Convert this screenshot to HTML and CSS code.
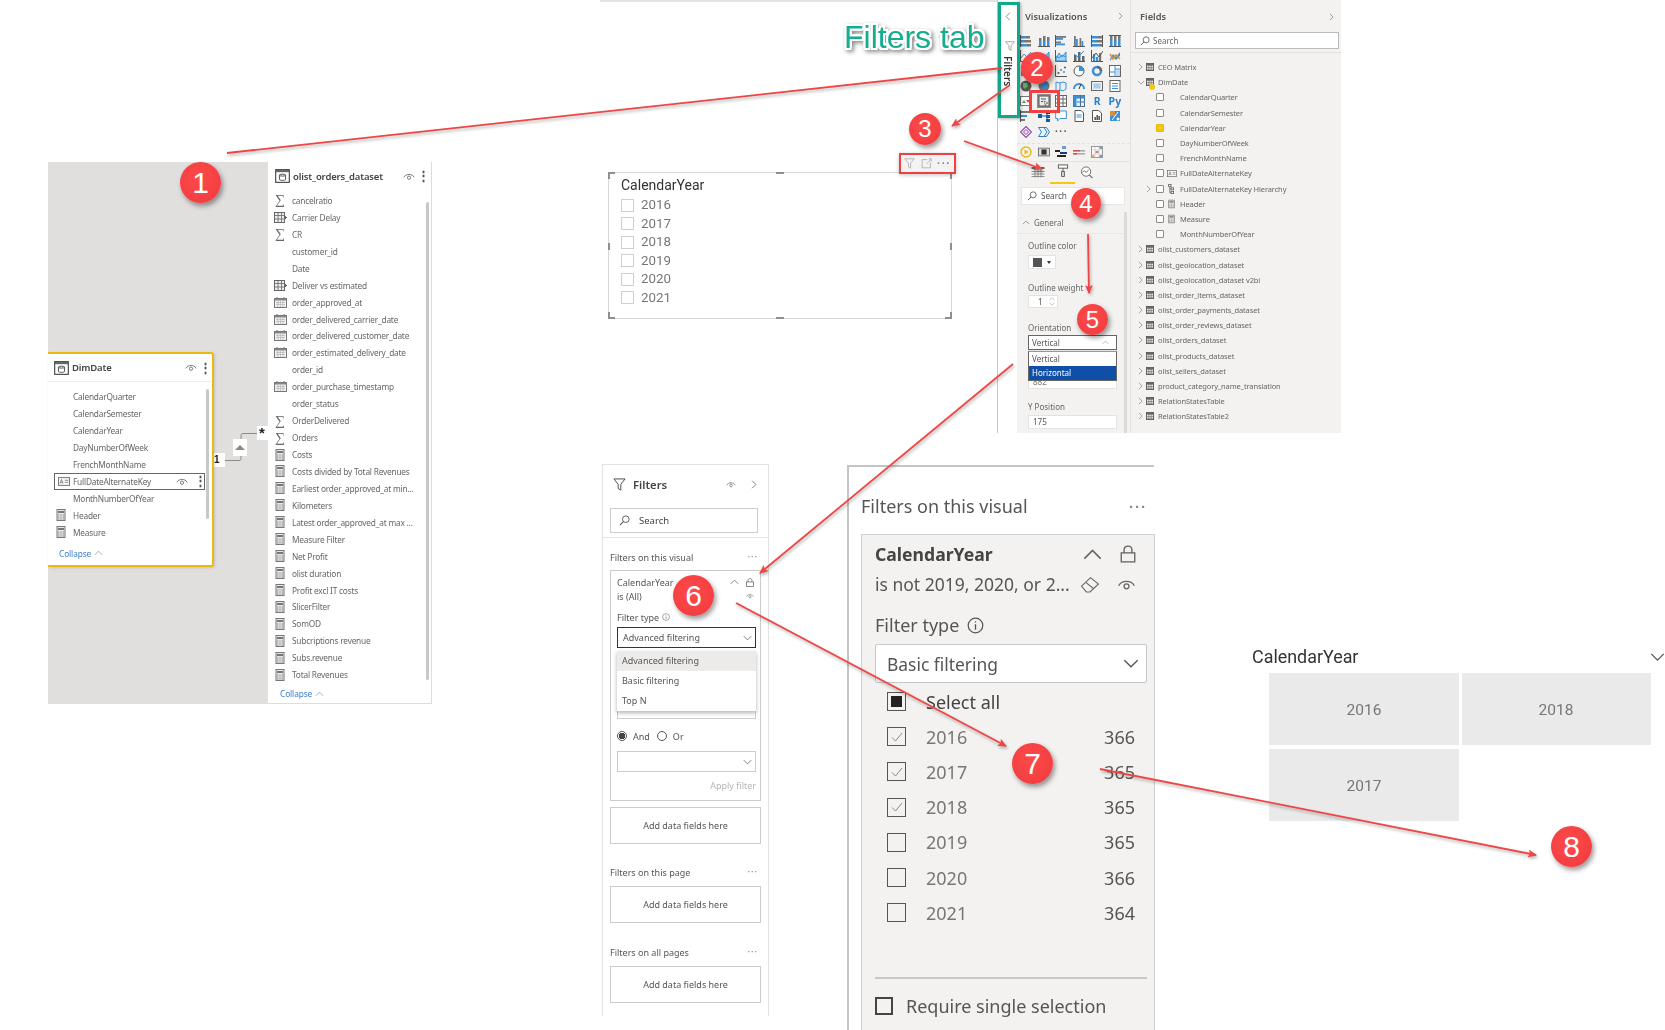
FILE: index.html
```html
<!DOCTYPE html>
<html lang="en">
<head>
<meta charset="utf-8">
<title>Power BI slicer walkthrough</title>
<link rel="stylesheet" href="styles.css">
</head>
<body>
<svg class="defs" width="0" height="0" aria-hidden="true">
  <symbol id="calc" viewBox="0 0 10 12"><rect x="1" y=".5" width="8" height="11" fill="#e8e8e8" stroke="#777"/><rect x="2" y="2" width="6" height="2" fill="#777"/><path d="M2 6h1.400M4.300 6h1.400M6.600 6H8M2 8h1.400M4.300 8h1.400M6.600 8H8M2 10h1.400M4.300 10h1.400M6.600 10H8" stroke="#888"/></symbol>
  <symbol id="cal" viewBox="0 0 13 11"><rect x=".5" y="1.500" width="12" height="9" fill="#f1f1f1" stroke="#777"/><rect x="1" y="2" width="11" height="1.500" fill="#888"/><path d="M2 5.500h9M2 7.500h9M4 4v6M6.500 4v6M9 4v6" stroke="#bbb" stroke-width=".8"/><path d="M3 0v2M10 0v2" stroke="#777"/></symbol>
  <symbol id="gridm" viewBox="0 0 13 11"><rect x=".5" y=".5" width="10" height="10" fill="#eee" stroke="#666"/><path d="M.5 3.500h10M.5 7h10M4 .5v10M7.500 .5v10" stroke="#666" stroke-width=".8"/><path d="M10 5.500h3M11.500 4v3" stroke="#666"/></symbol>
  <symbol id="tbl" viewBox="0 0 9 9"><rect x=".5" y=".5" width="8" height="8" fill="#f2f2f2" stroke="#555"/><path d="M.5 2.800h8M.5 5h8M.5 7h8M3.200 .5v8M5.800 .5v8" stroke="#666" stroke-width=".7"/><rect x="1" y="1" width="7" height="1.400" fill="#666"/></symbol>
  <symbol id="head" viewBox="0 0 16 15"><rect x=".7" y=".7" width="14.600" height="13.600" fill="#fff" stroke="#444" stroke-width="1.200"/><rect x="1" y="1" width="14" height="2.400" fill="#666"/><ellipse cx="8" cy="6.600" rx="3.300" ry="1" fill="none" stroke="#444"/><path d="M4.700 6.600v4.600c0 .6 1.400 1 3.300 1s3.300-.4 3.300-1V6.600" fill="none" stroke="#444"/></symbol>
  <symbol id="eye" viewBox="0 0 14 10"><path d="M1 6c2-4.600 10-4.600 12 0" fill="none" stroke="#666" stroke-width="1"/><circle cx="7" cy="6.400" r="1.900" fill="none" stroke="#666"/></symbol>
  <symbol id="abc" viewBox="0 0 14 10"><rect x=".5" y=".5" width="13" height="9" fill="#f6f6f6" stroke="#666"/><path d="M2.400 7.400l1.700-4.800 1.700 4.800M3 6h2.200M8 3.600h4M8 6h4" fill="none" stroke="#666" stroke-width=".8"/></symbol>
  <symbol id="up" viewBox="0 0 12 8"><path d="M1 6.500l5-5 5 5" fill="none" stroke="currentColor" stroke-width="1"/></symbol>
  <symbol id="down" viewBox="0 0 12 8"><path d="M1 1.500l5 5 5-5" fill="none" stroke="currentColor" stroke-width="1"/></symbol>
  <symbol id="left" viewBox="0 0 8 12"><path d="M6.500 1l-5 5 5 5" fill="none" stroke="currentColor" stroke-width="1"/></symbol>
  <symbol id="right" viewBox="0 0 8 12"><path d="M1.500 1l5 5-5 5" fill="none" stroke="currentColor" stroke-width="1"/></symbol>
  <symbol id="search" viewBox="0 0 12 12"><circle cx="7.400" cy="4.600" r="3.600" fill="none" stroke="#555"/><path d="M4.800 7.200L1 11" stroke="#555" stroke-width="1.100"/></symbol>
  <symbol id="funnel" viewBox="0 0 14 14"><path d="M1 1h12L8.400 6.800V13L5.600 11.400V6.800z" fill="none" stroke="currentColor"/></symbol>
  <symbol id="lock" viewBox="0 0 14 16"><path d="M3.500 7V4.400C3.500 2.400 5 1 7 1s3.500 1.400 3.500 3.400V7" fill="none" stroke="currentColor" stroke-width="1.200"/><rect x="1" y="7" width="12" height="8" fill="none" stroke="currentColor" stroke-width="1.200"/></symbol>
  <symbol id="eraser" viewBox="0 0 18 16"><path d="M1 9.500L9.500 1.500 17 7.500 9 15H5.500z" fill="none" stroke="currentColor"/><path d="M5 6l7.500 6" stroke="currentColor"/></symbol>
  <symbol id="info" viewBox="0 0 14 14"><circle cx="7" cy="7" r="6" fill="none" stroke="currentColor"/><path d="M7 6v4.500M7 3.400v1.200" stroke="currentColor" stroke-width="1.100"/></symbol>
  <symbol id="expand" viewBox="0 0 14 14"><path d="M8 2H1.500v10.500H12V6" fill="none" stroke="currentColor"/><path d="M7 7.500l6-6M9.500 1H13v3.500" fill="none" stroke="currentColor"/></symbol>
</svg>

<main class="canvas">
  <div class="topline"></div>

  <!-- model view -->
  <section class="shot model">
    <svg class="connector" viewBox="0 0 220 542" aria-hidden="true">
      <path d="M170 298.500h21q2 0 2-2v-23q0-2 2-2h19" fill="none" stroke="#8a8a8a" stroke-width="1"/>
      <rect x="164" y="291" width="13" height="14" fill="#fff"/>
      <rect x="185" y="277" width="14" height="17" fill="#fff"/>
      <path d="M187 288l5-5 5 5z" fill="#888"/>
      <rect x="209" y="264" width="12" height="14" fill="#fff"/>
    </svg>
    <span class="one">1</span><span class="many">*</span>

    <article class="dim-card">
      <header class="card-head">
        <svg class="head-ic"><use href="#head"/></svg>
        <strong class="card-name">DimDate</strong>
        <svg class="eye"><use href="#eye"/></svg>
        <span class="vdots">⋮</span>
      </header>
      <div class="m-list">
        <div class="m-row"><span class="m-ic"></span>CalendarQuarter</div>
        <div class="m-row"><span class="m-ic"></span>CalendarSemester</div>
        <div class="m-row"><span class="m-ic"></span>CalendarYear</div>
        <div class="m-row"><span class="m-ic"></span>DayNumberOfWeek</div>
        <div class="m-row"><span class="m-ic"></span>FrenchMonthName</div>
        <div class="m-row m-sel"><span class="m-ic"><svg class="i14"><use href="#abc"/></svg></span>FullDateAlternateKey<svg class="eye sel-eye"><use href="#eye"/></svg><span class="vdots sel-dots">⋮</span></div>
        <div class="m-row"><span class="m-ic"></span>MonthNumberOfYear</div>
        <div class="m-row"><span class="m-ic"><svg class="i10"><use href="#calc"/></svg></span>Header</div>
        <div class="m-row"><span class="m-ic"><svg class="i10"><use href="#calc"/></svg></span>Measure</div>
      </div>
      <div class="collapse">Collapse <svg class="col-up"><use href="#up"/></svg></div>
      <div class="scroll dim-scroll"></div>
    </article>
  </section>

  <article class="shot orders">
    <header class="card-head orders-head">
      <svg class="head-ic"><use href="#head"/></svg>
      <strong class="card-name">olist_orders_dataset</strong>
      <svg class="eye"><use href="#eye"/></svg>
      <span class="vdots">⋮</span>
    </header>
    <div class="m-list">
      <div class="m-row"><span class="m-ic sig">∑</span>cancelratio</div>
      <div class="m-row"><span class="m-ic"><svg class="i13"><use href="#gridm"/></svg></span>Carrier Delay</div>
      <div class="m-row"><span class="m-ic sig">∑</span>CR</div>
      <div class="m-row"><span class="m-ic"></span>customer_id</div>
      <div class="m-row"><span class="m-ic"></span>Date</div>
      <div class="m-row"><span class="m-ic"><svg class="i13"><use href="#gridm"/></svg></span>Deliver vs estimated</div>
      <div class="m-row"><span class="m-ic"><svg class="i13"><use href="#cal"/></svg></span>order_approved_at</div>
      <div class="m-row"><span class="m-ic"><svg class="i13"><use href="#cal"/></svg></span>order_delivered_carrier_date</div>
      <div class="m-row"><span class="m-ic"><svg class="i13"><use href="#cal"/></svg></span>order_delivered_customer_date</div>
      <div class="m-row"><span class="m-ic"><svg class="i13"><use href="#cal"/></svg></span>order_estimated_delivery_date</div>
      <div class="m-row"><span class="m-ic"></span>order_id</div>
      <div class="m-row"><span class="m-ic"><svg class="i13"><use href="#cal"/></svg></span>order_purchase_timestamp</div>
      <div class="m-row"><span class="m-ic"></span>order_status</div>
      <div class="m-row"><span class="m-ic sig">∑</span>OrderDelivered</div>
      <div class="m-row"><span class="m-ic sig">∑</span>Orders</div>
      <div class="m-row"><span class="m-ic"><svg class="i10"><use href="#calc"/></svg></span>Costs</div>
      <div class="m-row"><span class="m-ic"><svg class="i10"><use href="#calc"/></svg></span>Costs divided by Total Revenues</div>
      <div class="m-row"><span class="m-ic"><svg class="i10"><use href="#calc"/></svg></span>Earliest order_approved_at min...</div>
      <div class="m-row"><span class="m-ic"><svg class="i10"><use href="#calc"/></svg></span>Kilometers</div>
      <div class="m-row"><span class="m-ic"><svg class="i10"><use href="#calc"/></svg></span>Latest order_approved_at max ...</div>
      <div class="m-row"><span class="m-ic"><svg class="i10"><use href="#calc"/></svg></span>Measure Filter</div>
      <div class="m-row"><span class="m-ic"><svg class="i10"><use href="#calc"/></svg></span>Net Profit</div>
      <div class="m-row"><span class="m-ic"><svg class="i10"><use href="#calc"/></svg></span>olist duration</div>
      <div class="m-row"><span class="m-ic"><svg class="i10"><use href="#calc"/></svg></span>Profit excl IT costs</div>
      <div class="m-row"><span class="m-ic"><svg class="i10"><use href="#calc"/></svg></span>SlicerFilter</div>
      <div class="m-row"><span class="m-ic"><svg class="i10"><use href="#calc"/></svg></span>SomOD</div>
      <div class="m-row"><span class="m-ic"><svg class="i10"><use href="#calc"/></svg></span>Subcriptions revenue</div>
      <div class="m-row"><span class="m-ic"><svg class="i10"><use href="#calc"/></svg></span>Subs.revenue</div>
      <div class="m-row"><span class="m-ic"><svg class="i10"><use href="#calc"/></svg></span>Total Revenues</div>
    </div>
    <div class="collapse orders-collapse">Collapse <svg class="col-up"><use href="#up"/></svg></div>
    <div class="scroll orders-scroll"></div>
  </article>

  <!-- slicer -->
  <section class="shot slicer">
    <div class="slicer-title">CalendarYear</div>
    <div class="s-row"><span class="s-box"></span>2016</div>
    <div class="s-row"><span class="s-box"></span>2017</div>
    <div class="s-row"><span class="s-box"></span>2018</div>
    <div class="s-row"><span class="s-box"></span>2019</div>
    <div class="s-row"><span class="s-box"></span>2020</div>
    <div class="s-row"><span class="s-box"></span>2021</div>
    <i class="corner c-tl"></i><i class="corner c-tr"></i><i class="corner c-bl"></i><i class="corner c-br"></i>
    <i class="hd e-t"></i><i class="hd e-b"></i><i class="hd e-l"></i><i class="hd e-r"></i>
  </section>
  <div class="shot visual-bar">
    <svg class="vb-ic"><use href="#funnel"/></svg>
    <svg class="vb-ic"><use href="#expand"/></svg>
    <span class="vb-more">···</span>
  </div>

  <!-- Power BI side panes -->
  <section class="shot pbi">
    <aside class="strip">
      <svg class="strip-chev"><use href="#left"/></svg>
      <svg class="strip-funnel"><use href="#funnel"/></svg>
      <span class="strip-text">Filters</span>
    </aside>

    <div class="viz">
      <header class="pane-head">Visualizations<svg class="pane-chev"><use href="#right"/></svg></header>
      <div class="viz-grid">
        <svg class="vi" viewBox="0 0 12 12"><path d="M.5 0v12" stroke="#555"/><rect x="1" y="1" width="5" height="2.500" fill="#3a8fd6"/><rect x="6" y="1" width="4" height="2.500" fill="#777"/><rect x="1" y="5" width="3" height="2.500" fill="#3a8fd6"/><rect x="4" y="5" width="7" height="2.500" fill="#777"/><rect x="1" y="9" width="6" height="2.500" fill="#3a8fd6"/><rect x="7" y="9" width="4" height="2.500" fill="#777"/></svg>
        <svg class="vi" viewBox="0 0 12 12"><path d="M0 11.500h12" stroke="#555"/><rect x="1" y="6" width="2.500" height="5" fill="#3a8fd6"/><rect x="1" y="3" width="2.500" height="3" fill="#777"/><rect x="5" y="7" width="2.500" height="4" fill="#3a8fd6"/><rect x="5" y="1" width="2.500" height="6" fill="#777"/><rect x="9" y="5" width="2.500" height="6" fill="#3a8fd6"/><rect x="9" y="2" width="2.500" height="3" fill="#777"/></svg>
        <svg class="vi" viewBox="0 0 12 12"><path d="M.5 0v12" stroke="#555"/><rect x="1" y="1" width="10" height="1.800" fill="#777"/><rect x="1" y="3" width="7" height="1.800" fill="#3a8fd6"/><rect x="1" y="6.500" width="5" height="1.800" fill="#777"/><rect x="1" y="8.500" width="9" height="1.800" fill="#3a8fd6"/></svg>
        <svg class="vi" viewBox="0 0 12 12"><path d="M0 11.500h12" stroke="#555"/><rect x="1" y="1" width="1.800" height="10" fill="#777"/><rect x="3" y="4" width="1.800" height="7" fill="#3a8fd6"/><rect x="6.500" y="3" width="1.800" height="8" fill="#777"/><rect x="8.500" y="6" width="1.800" height="5" fill="#3a8fd6"/></svg>
        <svg class="vi" viewBox="0 0 12 12"><path d="M.5 0v12M11.500 0v12" stroke="#555"/><rect x="1" y="1" width="6" height="2.500" fill="#3a8fd6"/><rect x="7" y="1" width="4" height="2.500" fill="#777"/><rect x="1" y="5" width="4" height="2.500" fill="#3a8fd6"/><rect x="5" y="5" width="6" height="2.500" fill="#777"/><rect x="1" y="9" width="7" height="2.500" fill="#3a8fd6"/><rect x="8" y="9" width="3" height="2.500" fill="#777"/></svg>
        <svg class="vi" viewBox="0 0 12 12"><path d="M0 .5h12M0 11.500h12" stroke="#555"/><rect x="1" y="5" width="2.500" height="6" fill="#3a8fd6"/><rect x="1" y="1" width="2.500" height="4" fill="#777"/><rect x="5" y="7" width="2.500" height="4" fill="#3a8fd6"/><rect x="5" y="1" width="2.500" height="6" fill="#777"/><rect x="9" y="4" width="2.500" height="7" fill="#3a8fd6"/><rect x="9" y="1" width="2.500" height="3" fill="#777"/></svg>

        <svg class="vi" viewBox="0 0 12 12"><path d="M.5 0v11.500H12" fill="none" stroke="#555"/><path d="M1 8l3-4 3 3 4-5" fill="none" stroke="#3a8fd6"/></svg>
        <svg class="vi" viewBox="0 0 12 12"><path d="M1 11V8l3-4 3 3 4-5v9z" fill="#9cc7ea" stroke="#3a8fd6"/></svg>
        <svg class="vi" viewBox="0 0 12 12"><path d="M.5 0v11.500H12" fill="none" stroke="#555"/><path d="M1 9l3-6 3 4 4-5v9H1z" fill="#a8d0ef" stroke="#3a8fd6"/><path d="M1 6l3 2 3-3 4 2" fill="none" stroke="#3a8fd6"/></svg>
        <svg class="vi" viewBox="0 0 12 12"><path d="M0 11.500h12" stroke="#555"/><rect x="1" y="5" width="2.500" height="6" fill="#666"/><rect x="5" y="2" width="2.500" height="9" fill="#666"/><rect x="9" y="6" width="2.500" height="5" fill="#666"/><path d="M1 4l4 3 6-6" fill="none" stroke="#3a8fd6"/></svg>
        <svg class="vi" viewBox="0 0 12 12"><path d="M.5 0v11.500H12" fill="none" stroke="#555"/><rect x="2" y="4" width="2.200" height="7" fill="#3a8fd6"/><rect x="5" y="7" width="2.200" height="4" fill="#3a8fd6"/><rect x="8" y="3" width="2.200" height="8" fill="#777"/><path d="M1 8l4-5 3 4 4-6" fill="none" stroke="#555"/></svg>
        <svg class="vi" viewBox="0 0 12 12"><path d="M1 9l3-5 3 3 4-5v4l-4 4-3-3-3 4z" fill="#3a8fd6"/><path d="M1 4l3 5 3-4 4 4" fill="none" stroke="#e0902e" stroke-width="1.600"/></svg>

        <svg class="vi" viewBox="0 0 12 12"><rect x="1" y="6" width="3" height="5" fill="#3a8fd6"/><rect x="8" y="2" width="3" height="4" fill="#777"/></svg>
        <svg class="vi" viewBox="0 0 12 12"><rect x="1" y="1" width="10" height="2" fill="#777"/><rect x="3" y="5" width="6" height="2" fill="#777"/><rect x="4.500" y="9" width="3" height="2" fill="#777"/></svg>
        <svg class="vi" viewBox="0 0 12 12"><path d="M.5 0v11.500H12" fill="none" stroke="#555"/><circle cx="3.500" cy="8" r="1" fill="#555"/><circle cx="6" cy="5" r="1" fill="#3a8fd6"/><circle cx="9" cy="7" r="1" fill="#3a8fd6"/><circle cx="10" cy="2.500" r="1" fill="#555"/></svg>
        <svg class="vi" viewBox="0 0 12 12"><circle cx="6" cy="6" r="5" fill="#fff" stroke="#555"/><path d="M6 6V1a5 5 0 0 1 5 5z" fill="#3a8fd6"/></svg>
        <svg class="vi" viewBox="0 0 12 12"><circle cx="6" cy="6" r="4" fill="none" stroke="#3a8fd6" stroke-width="2.500"/><path d="M6 2a4 4 0 0 1 4 4" fill="none" stroke="#666" stroke-width="2.500"/></svg>
        <svg class="vi" viewBox="0 0 12 12"><rect x=".5" y=".5" width="11" height="11" fill="#fff" stroke="#666"/><path d="M6 .5v11M.5 7h5.500M6 4h5.500" stroke="#3a8fd6"/><rect x="7" y="5" width="4" height="6" fill="#bcd9f0"/></svg>

        <svg class="vi" viewBox="0 0 12 12"><circle cx="6" cy="6" r="5.500" fill="#555"/><path d="M3 3h4l1 3-3 3-2-2z" fill="#5fae5f"/></svg>
        <svg class="vi" viewBox="0 0 12 12"><circle cx="6" cy="6" r="5.500" fill="#777"/><path d="M3 2h5l2 4-4 4-3-3z" fill="#3a8fd6"/></svg>
        <svg class="vi" viewBox="0 0 12 12"><path d="M1 2l3 1 4-1 3 1v6l-3 2-3-1-4 1z" fill="#e9f2fb" stroke="#3a8fd6"/><path d="M5 3v7" stroke="#3a8fd6"/></svg>
        <svg class="vi" viewBox="0 0 12 12"><path d="M1 9a5 5 0 0 1 10 0" fill="none" stroke="#3a8fd6" stroke-width="2"/><path d="M6 9l2-5" stroke="#333"/></svg>
        <svg class="vi" viewBox="0 0 12 12"><rect x=".5" y="1.500" width="11" height="9" fill="#eee" stroke="#666"/><rect x="2.500" y="3.500" width="7" height="5" fill="#a9cdee"/></svg>
        <svg class="vi" viewBox="0 0 12 12"><rect x="1" y=".5" width="10" height="11" fill="#fff" stroke="#666"/><path d="M3 3.500h6M3 6h6M3 8.500h6" stroke="#3a8fd6"/></svg>

        <svg class="vi" viewBox="0 0 12 12"><rect x=".5" y="1.500" width="11" height="9" fill="#fff" stroke="#777"/><path d="M2 8l2-3 2 3z" fill="#4aa564"/><path d="M6 5h4l-2 3z" fill="#c94f4f"/></svg>
        <svg class="vi slicer-ic" viewBox="0 0 14 14"><rect width="14" height="14" fill="#8f8f8f"/><rect x="2" y="2" width="10" height="10" fill="#ececec" stroke="#555"/><path d="M4 5h5M4 7.500h2" stroke="#555"/><path d="M7 7l4 2-2 .6-.6 2z" fill="#fff" stroke="#333" stroke-width=".5"/></svg>
        <svg class="vi" viewBox="0 0 12 12"><rect x=".5" y=".5" width="11" height="11" fill="#fff" stroke="#666"/><path d="M.5 4h11M.5 8h11M4 .5v11M8 .5v11" stroke="#666"/></svg>
        <svg class="vi" viewBox="0 0 12 12"><rect x=".5" y=".5" width="11" height="11" fill="#e3eefb" stroke="#4a6f96"/><rect x=".5" y=".5" width="11" height="3" fill="#3a8fd6"/><rect x=".5" y=".5" width="3" height="11" fill="#3a8fd6"/><path d="M4 7h7.500M7.500 .5v11" stroke="#4a6f96"/></svg>
        <span class="vi-txt">R</span>
        <span class="vi-txt">Py</span>

        <svg class="vi" viewBox="0 0 12 12"><path d="M.5 0v12" stroke="#555"/><rect x="1" y="1" width="9" height="2" fill="#777"/><rect x="1" y="5" width="6" height="2" fill="#3a8fd6"/><rect x="1" y="9" width="4" height="2" fill="#777"/></svg>
        <svg class="vi" viewBox="0 0 12 12"><path d="M3 6h6M9 2v8" stroke="#0f5ea8"/><rect x="0" y="4" width="4" height="4" fill="#0f5ea8"/><rect x="8" y="0" width="4" height="4" fill="#333"/><rect x="8" y="5" width="4" height="3" fill="#0f5ea8"/><rect x="8" y="9" width="4" height="3" fill="#0f5ea8"/></svg>
        <svg class="vi" viewBox="0 0 12 12"><path d="M.7 1h10.600v7.500H5L2.500 11V8.500H.7z" fill="#fff" stroke="#3a8fd6"/></svg>
        <svg class="vi" viewBox="0 0 12 12"><path d="M2 .5h6l2.500 2.500v8.500H2z" fill="#fff" stroke="#555"/><path d="M3.500 5h5M3.500 7h5" stroke="#3a8fd6"/></svg>
        <svg class="vi" viewBox="0 0 12 12"><path d="M1.500 .5h6L10.500 3v8.500h-9z" fill="#fff" stroke="#555"/><rect x="3.500" y="7" width="1.300" height="3" fill="#333"/><rect x="5.500" y="5" width="1.300" height="5" fill="#333"/><rect x="7.500" y="6" width="1.300" height="4" fill="#333"/></svg>
        <svg class="vi" viewBox="0 0 12 12"><rect x="1" y="1" width="10" height="10" fill="#3a8fd6"/><rect x="1" y="1" width="5" height="5" fill="#e08a2e"/><path d="M3 10l3-4 3-4" stroke="#fff"/><circle cx="9" cy="9" r="1.500" fill="#fff"/></svg>

        <svg class="vi" viewBox="0 0 12 12"><path d="M6 .5L11.500 6 6 11.500.5 6z" fill="#f1e8f5" stroke="#8a4fa8" stroke-width="1.100"/><path d="M6 3.500L8.500 6 6 8.500 3.500 6z" fill="none" stroke="#8a4fa8"/></svg>
        <svg class="vi" viewBox="0 0 12 12"><path d="M.5 1.500h5.500l3 4.500-3 4.500H.5l3-4.500zM6 1.500h2.500l3 4.500-3 4.500H6" fill="#eaf3fb" stroke="#2f80c8"/></svg>
        <span class="vi-more">···</span>
      </div>

      <div class="viz-row">
        <svg class="vi" viewBox="0 0 12 12"><circle cx="6" cy="6" r="5" fill="none" stroke="#e8b90e" stroke-width="1.400"/><path d="M4.500 3.500l4 2.500-4 2.500z" fill="#e8b90e"/></svg>
        <svg class="vi" viewBox="0 0 14 12"><rect x=".5" y="1.500" width="13" height="9" fill="#ddd" stroke="#666"/><rect x="4" y="3" width="6" height="6" fill="#333"/></svg>
        <svg class="vi" viewBox="0 0 12 12"><rect x="7" width="4" height="3" fill="#6c9ec8"/><rect x="0" y="4" width="5" height="2" fill="#222"/><rect x="5" y="6" width="7" height="2" fill="#15406e"/><rect x="2" y="9" width="9" height="2" fill="#222"/></svg>
        <svg class="vi" viewBox="0 0 12 12"><rect y="4" width="7" height="1.600" fill="#c94f4f"/><rect x="7" y="4" width="5" height="1.600" fill="#aaa"/><rect y="7" width="4" height="1.600" fill="#c94f4f"/><rect x="4" y="7" width="8" height="1.600" fill="#aaa"/></svg>
        <svg class="vi" viewBox="0 0 12 12"><rect x=".5" y=".5" width="11" height="11" fill="#fff" stroke="#999"/><path d="M.5 4h11M.5 8h11M4 .5v11M8 .5v11" stroke="#bbb" stroke-width=".6"/><rect x="4.500" y="5" width="3" height="2" fill="#e07a7a"/><rect x="8.500" y="1" width="2.500" height="2" fill="#56b0a0"/><rect x="1" y="9" width="2.500" height="2" fill="#e0b050"/><rect x="8.500" y="9" width="2.500" height="2" fill="#5a9bd6"/></svg>
      </div>

      <div class="viz-tabs">
        <svg class="tab-ic" viewBox="0 0 14 12"><rect x=".5" y=".5" width="13" height="2" fill="#666"/><path d="M.5 5h13M.5 7.500h13M.5 10h13M4 3v8M7 3v8M10 3v8" stroke="#777" stroke-width=".8"/></svg>
        <div class="tab-on"><svg class="tab-ic" viewBox="0 0 12 14"><rect x="1" y="1" width="10" height="3.500" fill="#fff" stroke="#555"/><path d="M6 4.500V8M4.500 8h3v5.500h-3z" fill="#ddd" stroke="#555"/></svg></div>
        <svg class="tab-ic" viewBox="0 0 14 14"><circle cx="6" cy="6" r="5" fill="#fff" stroke="#666"/><path d="M2 7l2-2 2 2 3-3" fill="none" stroke="#666"/><path d="M9.500 9.500L13 13" stroke="#666" stroke-width="1.200"/></svg>
      </div>

      <div class="fmt-search"><svg class="srch-ic"><use href="#search"/></svg>Search</div>

      <div class="fmt">
        <div class="fmt-main">
          <div class="fmt-general"><svg class="gen-up"><use href="#up"/></svg>General</div>
          <div class="fmt-body">
            <div class="f-label first">Outline color</div>
            <div class="swatch-btn"><span class="swatch"></span><span class="caret"></span></div>
            <div class="f-label w-gap">Outline weight</div>
            <div class="spin">1<span class="spin-btns"><svg class="spin-ic"><use href="#up"/></svg><svg class="spin-ic"><use href="#down"/></svg></span></div>
            <div class="f-label o-gap">Orientation</div>
            <div class="sel-wrap">
              <div class="sel-box">Vertical<svg class="sel-up"><use href="#up"/></svg></div>
              <div class="under-input">882</div>
              <div class="sel-menu">
                <div class="opt">Vertical</div>
                <div class="opt opt-on">Horizontal</div>
              </div>
            </div>
            <div class="f-label y-gap">Y Position</div>
            <div class="y-input">175</div>
          </div>
        </div>
        <div class="fmt-scroll"></div>
      </div>
    </div>

    <div class="fields">
      <header class="pane-head fields-head">Fields<svg class="pane-chev fields-chev"><use href="#right"/></svg></header>
      <div class="fields-search"><svg class="srch-ic"><use href="#search"/></svg>Search</div>
      <div class="f-rows">
        <div class="t-row"><svg class="exp"><use href="#right"/></svg><svg class="ti"><use href="#tbl"/></svg>CEO Matrix</div>
        <div class="t-row"><svg class="exp exp-d"><use href="#down"/></svg><span class="ti-wrap"><svg class="ti"><use href="#tbl"/></svg><i class="y-dot"></i></span>DimDate</div>
        <div class="c-row"><span class="exp-gap"></span><span class="cb"></span><span class="c-ic"></span>CalendarQuarter</div>
        <div class="c-row"><span class="exp-gap"></span><span class="cb"></span><span class="c-ic"></span>CalendarSemester</div>
        <div class="c-row"><span class="exp-gap"></span><span class="cb cb-on"></span><span class="c-ic"></span>CalendarYear</div>
        <div class="c-row"><span class="exp-gap"></span><span class="cb"></span><span class="c-ic"></span>DayNumberOfWeek</div>
        <div class="c-row"><span class="exp-gap"></span><span class="cb"></span><span class="c-ic"></span>FrenchMonthName</div>
        <div class="c-row"><span class="exp-gap"></span><span class="cb"></span><span class="c-ic"><svg class="i11"><use href="#abc"/></svg></span>FullDateAlternateKey</div>
        <div class="c-row"><span class="exp-gap"><svg class="exp"><use href="#right"/></svg></span><span class="cb"></span><span class="c-ic"><svg class="i8" viewBox="0 0 8 12"><rect x=".5" y=".5" width="3" height="2.500" fill="none" stroke="#666"/><rect x="3.500" y="4.500" width="3" height="2.500" fill="none" stroke="#666"/><rect x="3.500" y="9" width="3" height="2.500" fill="none" stroke="#666"/><path d="M2 3v7.500h1.500M2 5.700h1.500" fill="none" stroke="#666"/></svg></span>FullDateAlternateKey Hierarchy</div>
        <div class="c-row"><span class="exp-gap"></span><span class="cb"></span><span class="c-ic"><svg class="i8"><use href="#calc"/></svg></span>Header</div>
        <div class="c-row"><span class="exp-gap"></span><span class="cb"></span><span class="c-ic"><svg class="i8"><use href="#calc"/></svg></span>Measure</div>
        <div class="c-row"><span class="exp-gap"></span><span class="cb"></span><span class="c-ic"></span>MonthNumberOfYear</div>
        <div class="t-row"><svg class="exp"><use href="#right"/></svg><svg class="ti"><use href="#tbl"/></svg>olist_customers_dataset</div>
        <div class="t-row"><svg class="exp"><use href="#right"/></svg><svg class="ti"><use href="#tbl"/></svg>olist_geolocation_dataset</div>
        <div class="t-row"><svg class="exp"><use href="#right"/></svg><svg class="ti"><use href="#tbl"/></svg>olist_geolocation_dataset v2bi</div>
        <div class="t-row"><svg class="exp"><use href="#right"/></svg><svg class="ti"><use href="#tbl"/></svg>olist_order_items_dataset</div>
        <div class="t-row"><svg class="exp"><use href="#right"/></svg><svg class="ti"><use href="#tbl"/></svg>olist_order_payments_dataset</div>
        <div class="t-row"><svg class="exp"><use href="#right"/></svg><svg class="ti"><use href="#tbl"/></svg>olist_order_reviews_dataset</div>
        <div class="t-row"><svg class="exp"><use href="#right"/></svg><svg class="ti"><use href="#tbl"/></svg>olist_orders_dataset</div>
        <div class="t-row"><svg class="exp"><use href="#right"/></svg><svg class="ti"><use href="#tbl"/></svg>olist_products_dataset</div>
        <div class="t-row"><svg class="exp"><use href="#right"/></svg><svg class="ti"><use href="#tbl"/></svg>olist_sellers_dataset</div>
        <div class="t-row"><svg class="exp"><use href="#right"/></svg><svg class="ti"><use href="#tbl"/></svg>product_category_name_translation</div>
        <div class="t-row"><svg class="exp"><use href="#right"/></svg><svg class="ti"><use href="#tbl"/></svg>RelationStatesTable</div>
        <div class="t-row"><svg class="exp"><use href="#right"/></svg><svg class="ti"><use href="#tbl"/></svg>RelationStatesTable2</div>
      </div>
    </div>
  </section>

  <!-- small filter pane -->
  <section class="shot fpane">
    <header class="fp-head">
      <svg class="fp-funnel"><use href="#funnel"/></svg>
      <strong class="fp-title">Filters</strong>
      <svg class="fp-eye"><use href="#eye"/></svg>
      <svg class="fp-chev"><use href="#right"/></svg>
    </header>
    <div class="fp-search"><svg class="fp-sic"><use href="#search"/></svg>Search</div>
    <div class="fp-divider"></div>
    <div class="fp-sec fp-sec1"><span>Filters on this visual</span><span class="fp-dots">···</span></div>
    <div class="fp-card">
      <div class="fpc-top"><span>CalendarYear</span><span class="fpc-icons"><svg class="fpc-up"><use href="#up"/></svg><svg class="fpc-lock"><use href="#lock"/></svg></span></div>
      <div class="fpc-top fpc-second"><span>is (All)</span><svg class="fpc-eye"><use href="#eye"/></svg></div>
      <div class="fpc-type">Filter type <svg class="fpc-info"><use href="#info"/></svg></div>
      <div class="fpc-select">Advanced filtering<svg class="fpc-chev"><use href="#down"/></svg></div>
      <div class="fpc-menu-wrap">
        <div class="fpc-under"></div>
        <div class="fpc-menu">
          <div class="fpc-opt fpc-opt-on">Advanced filtering</div>
          <div class="fpc-opt">Basic filtering</div>
          <div class="fpc-opt">Top N</div>
        </div>
      </div>
      <div class="fpc-radio"><span class="radio radio-on"></span>And<span class="radio radio-or"></span>Or</div>
      <div class="fpc-select fpc-select2"><svg class="fpc-chev"><use href="#down"/></svg></div>
      <div class="fpc-apply">Apply filter</div>
    </div>
    <div class="fp-add fp-add1">Add data fields here</div>
    <div class="fp-sec fp-sec2"><span>Filters on this page</span><span class="fp-dots">···</span></div>
    <div class="fp-add">Add data fields here</div>
    <div class="fp-sec fp-sec3"><span>Filters on all pages</span><span class="fp-dots">···</span></div>
    <div class="fp-add">Add data fields here</div>
  </section>

  <!-- enlarged filter pane -->
  <section class="shot big">
    <div class="big-head"><span>Filters on this visual</span><span class="big-dots">···</span></div>
    <div class="big-card">
      <div class="bc-line"><strong class="bc-name">CalendarYear</strong><span class="bc-icons"><svg class="bc-up"><use href="#up"/></svg><svg class="bc-lock"><use href="#lock"/></svg></span></div>
      <div class="bc-line bc-status"><span>is not 2019, 2020, or 2...</span><span class="bc-icons"><svg class="bc-eraser"><use href="#eraser"/></svg><svg class="bc-eye"><use href="#eye"/></svg></span></div>
      <div class="bc-type">Filter type<svg class="bc-info"><use href="#info"/></svg></div>
      <div class="bc-select">Basic filtering<svg class="bc-chev"><use href="#down"/></svg></div>
      <div class="bc-list">
        <div class="bc-row bc-all"><span class="bc-box bc-mixed"></span><span>Select all</span></div>
        <div class="bc-row"><span class="bc-box bc-tick"><svg class="tick" viewBox="0 0 14 14"><path d="M2 7.500l3.500 3.500L12 3" fill="none" stroke="#8a8a8a" stroke-width="1"/></svg></span><span class="bc-year">2016</span><span class="bc-count">366</span></div>
        <div class="bc-row"><span class="bc-box bc-tick"><svg class="tick" viewBox="0 0 14 14"><path d="M2 7.500l3.500 3.500L12 3" fill="none" stroke="#8a8a8a" stroke-width="1"/></svg></span><span class="bc-year">2017</span><span class="bc-count">365</span></div>
        <div class="bc-row"><span class="bc-box bc-tick"><svg class="tick" viewBox="0 0 14 14"><path d="M2 7.500l3.500 3.500L12 3" fill="none" stroke="#8a8a8a" stroke-width="1"/></svg></span><span class="bc-year">2018</span><span class="bc-count">365</span></div>
        <div class="bc-row"><span class="bc-box"></span><span class="bc-year">2019</span><span class="bc-count">365</span></div>
        <div class="bc-row"><span class="bc-box"></span><span class="bc-year">2020</span><span class="bc-count">366</span></div>
        <div class="bc-row"><span class="bc-box"></span><span class="bc-year">2021</span><span class="bc-count">364</span></div>
      </div>
      <div class="bc-rule"></div>
      <div class="bc-require"><span class="bc-rbox"></span>Require single selection</div>
    </div>
  </section>

  <!-- horizontal slicer -->
  <section class="shot hslicer">
    <header class="hs-head"><span>CalendarYear</span><svg class="hs-chev"><use href="#down"/></svg></header>
    <div class="hs-grid">
      <div class="tile">2016</div>
      <div class="tile">2018</div>
      <div class="tile">2017</div>
    </div>
  </section>

  <!-- annotations -->
  <div class="tab-frame"></div>
  <div class="red-frame viz-frame"></div>
  <div class="red-frame bar-frame"></div>
  <div class="tab-label">Filters tab</div>

  <svg class="arrows" viewBox="0 0 1665 1030" aria-hidden="true">
    <defs>
      <marker id="head-mark" markerWidth="9" markerHeight="8" refX="8" refY="4" orient="auto" markerUnits="userSpaceOnUse"><path d="M0 0l9 4-9 4 2-4z" fill="#f04545"/></marker>
    </defs>
    <g class="arrow-lines">
      <path d="M227 153L1002 68"/>
      <path d="M1010 85L952 126" marker-end="url(#head-mark)"/>
      <path d="M964 141L1042 169" marker-end="url(#head-mark)"/>
      <path d="M1088 234L1089 293" marker-end="url(#head-mark)"/>
      <path d="M1013 364L760 573" marker-end="url(#head-mark)"/>
      <path d="M736 603L1006 746" marker-end="url(#head-mark)"/>
      <path d="M1100 769L1536 855" marker-end="url(#head-mark)"/>
    </g>
  </svg>

  <span class="badge b1">1</span>
  <span class="badge b2">2</span>
  <span class="badge b3">3</span>
  <span class="badge b4">4</span>
  <span class="badge b5">5</span>
  <span class="badge b6">6</span>
  <span class="badge b7">7</span>
  <span class="badge b8">8</span>
</main>
</body>
</html>
```

FILE: styles.css
```css
* { box-sizing: border-box; }
html, body { margin: 0; padding: 0; background: #fff; }
body { font-family: "Noto Sans", "Open Sans", sans-serif; color: #555; }
.defs { position: absolute; }
svg { display: block; flex: none; }

.canvas { position: relative; width: 1665px; height: 1030px; overflow: hidden; background: #fff; }
.shot { position: absolute; filter: blur(.3px); }
.topline { position: absolute; left: 600px; top: 0; width: 741px; height: 2px; background: #e3e3e3; }

/* model view */
.model { left: 48px; top: 162px; width: 220px; height: 542px; background: #e1dfdd; }
.connector { position: absolute; inset: 0; width: 220px; height: 542px; }
.one { position: absolute; left: 166px; top: 291px; font: bold 10px/14px "Liberation Sans", sans-serif; color: #222; }
.many { position: absolute; left: 211px; top: 263px; font: bold 15px/16px "Liberation Sans", sans-serif; color: #222; }
.dim-card { position: absolute; left: 0; top: 190px; width: 166px; height: 215px; background: #fff; border: 2px solid #e9bb10; border-left: 0; border-radius: 0 3px 3px 0; box-shadow: 1px 1px 3px rgba(0,0,0,.12); }
.card-head { display: flex; align-items: center; height: 28px; padding-left: 6px; border-bottom: 1px solid #eee; }
.head-ic { width: 15px; height: 14px; }
.card-name { margin-left: 3px; font-size: 9.500px; letter-spacing: -.15px; font-weight: 600; color: #444; flex: 1; }
.eye { width: 12px; height: 9px; margin-right: 1px; }
.vdots { width: 14px; text-align: center; font: bold 13px/14px "Liberation Sans", sans-serif; color: #555; }
.m-list { display: flex; flex-direction: column; margin-top: 6px; }
.m-row { display: flex; align-items: center; height: 16.940px; font-size: 8.300px; letter-spacing: -.2px; color: #666; white-space: nowrap; }
.m-ic { display: flex; justify-content: center; align-items: center; width: 25px; flex: none; }
.i10 { width: 10px; height: 12px; }
.i13 { width: 13px; height: 11px; }
.i14 { width: 12px; height: 9px; }
.m-sel { position: relative; margin: 0 6px 0 6px; border: 1px solid #666; height: 17px; width: 151px; }
.m-sel .m-ic { width: 18px; }
.sel-eye { margin-left: auto; margin-right: 6px; }
.sel-dots { width: 10px; }
.collapse { display: flex; align-items: center; gap: 3px; margin: 7px 0 0 11px; font-size: 8.300px; letter-spacing: -.1px; color: #3d7fc8; }
.col-up { width: 9px; height: 6px; color: #6d9fd4; }
.scroll { position: absolute; width: 3px; background: #c8c8c8; border-radius: 2px; }
.dim-scroll { left: 158px; top: 35px; height: 130px; }

.orders { left: 268px; top: 162px; width: 164px; height: 542px; background: #fff; border-right: 1px solid #ddd; border-bottom: 1px solid #ddd; }
.orders-head { padding-left: 7px; height: 28px; border-bottom: 0; padding-right: 1px; }
.orders .m-ic { width: 24px; }
.orders .m-list { margin-top: 2px; }
.sig { font: 14px/14px "Liberation Serif", serif; color: #666; }
.orders-collapse { margin: 5px 0 0 12px; }
.orders-scroll { left: 158px; top: 40px; height: 478px; }

/* slicer */
.slicer { left: 608px; top: 172px; width: 344px; height: 147px; border: 1px solid #d8d8d8; padding: 4px 0 0 12px; }
.slicer-title { height: 19px; font: 14px/16px Roboto, sans-serif; color: #333; }
.s-row { display: flex; align-items: center; height: 18.500px; font: 13.300px/18px Roboto, sans-serif; color: #777; }
.s-box { width: 13px; height: 13px; margin-right: 7px; border: 1px solid #cfcfcf; }
.hd { position: absolute; background: #8f8f8f; }
.corner { position: absolute; width: 7px; height: 7px; border: 0 solid #8f8f8f; }
.c-tl { left: -1px; top: -1px; border-width: 2px 0 0 2px; }
.c-tr { right: -1px; top: -1px; border-width: 2px 2px 0 0; }
.c-bl { left: -1px; bottom: -1px; border-width: 0 0 2px 2px; }
.c-br { right: -1px; bottom: -1px; border-width: 0 2px 2px 0; }
.e-t { left: 167px; top: -1px; width: 8px; height: 2px; }
.e-b { left: 167px; bottom: -1px; width: 8px; height: 2px; }
.e-l { left: -1px; top: 70px; width: 2px; height: 7px; }
.e-r { right: -1px; top: 70px; width: 2px; height: 7px; }

.visual-bar { left: 899px; top: 153px; width: 57px; height: 21px; display: flex; align-items: center; justify-content: space-between; padding: 0 5px 0 5px; background: #f3f3f3; color: #aaa; box-shadow: 0 1px 4px rgba(0,0,0,.25); }
.vb-ic { width: 11px; height: 11px; }
.vb-more { font: bold 11px/11px "Liberation Sans", sans-serif; letter-spacing: 1px; color: #888; }

/* pbi panes */
.pbi { left: 997px; top: 2px; margin-top: -2px; width: 344px; height: 433px; display: flex; background: #fff; }
.strip { position: relative; width: 20px; flex: none; border-left: 1px solid #c8c8c8; color: #666; }
.strip-chev { position: absolute; left: 7px; top: 12px; width: 6px; height: 9px; }
.strip-funnel { position: absolute; left: 7px; top: 41px; width: 10px; height: 10px; color: #888; }
.strip-text { position: absolute; left: 3px; top: 56px; writing-mode: vertical-rl; font-size: 10px; font-weight: 600; line-height: 14px; color: #333; }

.viz { width: 114px; flex: none; display: flex; flex-direction: column; background: #f3f2f1; border-right: 1px solid #e3e2e1; overflow: hidden; }
.pane-head { display: flex; align-items: center; justify-content: space-between; height: 33px; padding: 0 7px 0 8px; font-size: 9.300px; font-weight: 600; color: #555; }
.pane-chev { width: 5px; height: 8px; color: #666; }
.viz-grid { display: grid; grid-template-columns: repeat(6, 17.800px); grid-auto-rows: 15.200px; justify-items: center; align-items: center; height: 106.400px; filter: blur(.3px); }
.vi { width: 12px; height: 12px; }
.slicer-ic { width: 14px; height: 14px; }
.vi-txt { font: bold 10.500px/12px "Noto Sans", sans-serif; color: #2a7fc9; }
.vi-more { font: bold 10px/10px "Liberation Sans", sans-serif; color: #555; letter-spacing: 1px; }
.viz-row { display: grid; grid-template-columns: repeat(6, 17.800px); justify-items: center; align-items: center; height: 19px; margin-top: 3.600px; border-top: 1px dashed #e2e2e2; border-bottom: 1px solid #e2e2e2; filter: blur(.3px); }
.viz-tabs { display: flex; height: 22px; padding-left: 14px; align-items: center; }
.tab-ic { width: 14px; height: 13px; }
.tab-on { display: flex; justify-content: center; align-items: center; width: 25px; height: 22px; margin-left: 5px; margin-right: 5px; padding-bottom: 2px; border-bottom: 2px solid #f2c811; }
.fmt-search { display: flex; align-items: center; height: 18px; margin: 3px 5px 0 4px; background: #fff; border: 1px solid #e6e6e6; font-size: 8.200px; color: #555; }
.srch-ic { width: 10px; height: 10px; margin: 0 4px 0 5px; }
.fmt { display: flex; margin-top: 7.500px; height: 221px; }
.fmt-main { flex: 1; min-width: 0; }
.fmt-scroll { width: 3px; margin-right: 3px; background: #dadada; }
.fmt-general { display: flex; align-items: center; height: 22px; padding-left: 5px; border-bottom: 1px solid #e6e6e6; font-size: 8px; color: #666; }
.gen-up { width: 8px; height: 5px; margin-right: 4px; color: #777; }
.fmt-body { padding-left: 11px; }
.f-label { height: 12px; font-size: 8px; line-height: 12px; color: #666; }
.first { margin-top: 6px; }
.swatch-btn { display: flex; align-items: center; width: 28px; height: 14px; margin-top: 3px; padding-left: 4px; background: #fff; border: 1px solid #e3e3e3; }
.swatch { width: 9px; height: 9px; background: #555; }
.caret { margin-left: 5px; border: 2.500px solid transparent; border-top: 3px solid #333; border-bottom: 0; }
.w-gap { margin-top: 13px; }
.spin { display: flex; align-items: center; justify-content: space-between; width: 30px; height: 13px; margin-top: 1px; padding: 0 2px 0 9px; background: #fff; border: 1px solid #e3e3e3; font-size: 8px; color: #555; }
.spin-btns { display: flex; flex-direction: column; gap: 1px; }
.spin-ic { width: 6px; height: 4px; color: #888; }
.o-gap { margin-top: 14px; }
.sel-wrap { position: relative; width: 89px; height: 54px; margin-top: 1px; }
.sel-box { display: flex; align-items: center; justify-content: space-between; height: 15px; padding: 0 7px 0 3px; background: #fff; border: 1px solid #666; font-size: 8px; color: #555; }
.sel-up { width: 7px; height: 5px; color: #999; }
.under-input { height: 39px; padding: 26px 0 0 4px; background: #fff; border: 1px solid #e3e3e3; font-size: 8px; line-height: 10px; color: #777; }
.sel-menu { position: absolute; left: 0; top: 16px; width: 89px; background: #fff; border: 1px solid #666; border-top-color: #999; font-size: 8px; }
.opt { height: 14px; padding-left: 3px; line-height: 14px; color: #555; }
.opt-on { background: #0f4fa8; color: #fff; }
.y-gap { margin-top: 11.500px; }
.y-input { width: 89px; height: 14px; margin-top: 2px; padding-left: 4px; background: #fff; border: 1px solid #e3e3e3; font-size: 8px; line-height: 12px; color: #555; }

.fields { flex: 1; min-width: 0; background: #f3f2f1; overflow: hidden; }
.fields-head { padding: 0 7px 0 9px; }
.fields-search { display: flex; align-items: center; width: 204px; height: 17px; margin: -1px 0 0 4px; background: #fff; border: 1px solid #bbb; font-size: 8px; color: #666; }
.fields-search .srch-ic { margin: 0 3px 0 4px; }
.f-rows { margin-top: 3px; padding-top: 6.500px; border-top: 1px solid #e3e2e1; }
.t-row, .c-row { display: flex; align-items: center; height: 15.200px; font-size: 7.500px; letter-spacing: -.12px; color: #666; white-space: nowrap; }
.t-row { padding-left: 7px; }
.exp { width: 5px; height: 8px; color: #777; }
.exp-d { width: 8px; height: 5px; margin-left: -1px; margin-right: -2px; }
.ti { width: 8px; height: 8px; margin: 0 4px 0 3px; }
.ti-wrap { position: relative; display: block; }
.y-dot { position: absolute; left: 6px; top: 6px; width: 6px; height: 6px; border-radius: 50%; background: #f2c811; }
.c-row { padding-left: 15px; }
.exp-gap { display: block; width: 10px; }
.cb { width: 8px; height: 8px; background: #fff; border: 1px solid #8a8a8a; border-radius: 1px; flex: none; }
.cb-on { background: #f2c811; border-color: #e3b90a; }
.c-ic { display: flex; justify-content: center; width: 13px; margin: 0 2px 0 1px; flex: none; }
.i11 { width: 10px; height: 7px; }
.i8 { width: 7px; height: 10px; }

/* small filter pane */
.fpane { left: 602px; top: 464px; width: 167px; height: 552px; background: #fff; border: 1px solid #e2e2e2; border-bottom: 0; }
.fp-head { display: flex; align-items: center; height: 38px; padding: 0 11px 0 10px; }
.fp-funnel { width: 13px; height: 13px; color: #444; }
.fp-title { margin-left: 7px; flex: 1; font-size: 11.300px; font-weight: 600; color: #444; }
.fp-eye { width: 10px; height: 7px; margin-right: 15px; }
.fp-chev { width: 6px; height: 9px; color: #555; }
.fp-search { display: flex; align-items: center; width: 148px; height: 25px; margin: 5px 0 0 7px; border: 1px solid #ccc; font-size: 9.500px; color: #444; }
.fp-sic { width: 11px; height: 11px; margin: 0 9px 0 8px; }
.fp-divider { margin-top: 4px; height: 1px; background: #e5e5e5; }
.fp-sec { display: flex; justify-content: space-between; align-items: center; width: 151px; height: 12px; margin-left: 7px; font-size: 9px; color: #555; }
.fp-sec1 { margin-top: 13px; }
.fp-sec2 { margin-top: 22px; }
.fp-sec3 { margin-top: 23px; }
.fp-dots { margin-right: 3px; font: bold 9px/9px "Liberation Sans", sans-serif; color: #999; letter-spacing: .5px; }
.fp-card { display: flex; flex-direction: column; width: 151px; height: 231px; margin: 7px 0 0 7px; padding: 4px 4px 0 6px; border: 1px solid #ccc; }
.fpc-top { display: flex; align-items: center; justify-content: space-between; height: 14px; font-size: 9px; color: #555; }
.fpc-icons { display: flex; align-items: center; gap: 7px; margin-right: 2px; }
.fpc-up { width: 9px; height: 6px; color: #666; }
.fpc-lock { width: 8px; height: 9px; color: #555; }
.fpc-eye { width: 8px; height: 6px; margin-right: 2px; }
.fpc-type { display: flex; align-items: center; gap: 3px; height: 14px; margin-top: 7px; font-size: 9px; color: #555; }
.fpc-info { width: 8px; height: 8px; color: #666; }
.fpc-select { display: flex; align-items: center; justify-content: space-between; height: 21px; margin-top: 3px; padding: 0 3px 0 5px; border: 1px solid #333; font-size: 9px; color: #555; }
.fpc-chev { width: 9px; height: 6px; color: #555; }
.fpc-menu-wrap { position: relative; height: 68px; margin-top: 3px; }
.fpc-under { height: 68px; border: 1px solid #ccc; }
.fpc-menu { position: absolute; left: 0; top: 0; width: 100%; height: 60px; background: #fff; box-shadow: 0 2px 4px rgba(0,0,0,.3); }
.fpc-opt { height: 19.800px; padding-left: 5px; font-size: 9px; line-height: 19.800px; color: #555; }
.fpc-opt-on { background: #edebe9; }
.fpc-radio { display: flex; align-items: center; height: 14px; margin-top: 10px; font-size: 9px; color: #555; }
.radio { width: 10px; height: 10px; margin-right: 6px; border: 1px solid #555; border-radius: 50%; }
.radio-on { background: radial-gradient(circle, #444 0 3px, #fff 3.500px); }
.radio-or { margin-left: 7px; }
.fpc-select2 { justify-content: flex-end; margin-top: 8px; border-color: #ccc; }
.fpc-apply { margin-top: 7px; text-align: right; font-size: 9px; color: #b5b5b5; }
.fp-add { display: flex; align-items: center; justify-content: center; width: 151px; height: 37px; margin: 8px 0 0 7px; border: 1px solid #ccc; font-size: 9px; color: #555; }
.fp-add1 { margin-top: 6px; }

/* big pane */
.big { left: 847px; top: 465px; width: 307px; height: 565px; border-left: 2px solid #c4c4c4; border-top: 2px solid #c4c4c4; background: #fff; }
.big-head { display: flex; align-items: center; justify-content: space-between; height: 24px; margin: 27px 7px 0 12px; font-size: 18px; color: #555; }
.big-dots { font: bold 15px/15px "Liberation Sans", sans-serif; color: #888; letter-spacing: 1px; }
.big-card { width: 294px; height: 510px; margin: 16px 0 0 12px; padding: 7px 0 0 13px; background: #f3f2f1; border: 1px solid #cfcfcf; border-bottom: 0; }
.bc-line { display: flex; align-items: center; justify-content: space-between; height: 24px; padding-right: 18px; }
.bc-name { font-size: 17.600px; font-weight: 700; color: #444; }
.bc-icons { display: flex; align-items: center; gap: 17px; color: #666; }
.bc-up { width: 21px; height: 13px; }
.bc-lock { width: 16px; height: 18px; }
.bc-status { margin-top: 6px; font-size: 17.500px; color: #555; }
.bc-eraser { width: 20px; height: 17px; }
.bc-eye { width: 19px; height: 13px; margin-left: 0; }
.bc-type { display: flex; align-items: center; gap: 8px; height: 26px; margin-top: 16px; font-size: 18px; color: #555; }
.bc-info { width: 17px; height: 17px; color: #555; }
.bc-select { display: flex; align-items: center; justify-content: space-between; width: 272px; height: 39px; margin-top: 6px; padding: 0 7px 0 11px; background: #fff; border: 1px solid #c8c8c8; border-radius: 2px; font-size: 17.400px; color: #555; }
.bc-chev { width: 16px; height: 11px; color: #555; }
.bc-list { margin-top: 1px; padding-left: 12px; }
.bc-row { display: flex; align-items: center; height: 35.200px; font-size: 18px; color: #555; }
.bc-all { color: #444; }
.bc-box { display: flex; align-items: center; justify-content: center; width: 19px; height: 19px; margin-right: 20px; border: 1px solid #555; flex: none; }
.bc-mixed::after { content: ""; width: 11px; height: 11px; background: #222; }
.tick { width: 14px; height: 14px; }
.bc-year { color: #777; }
.bc-count { margin-left: auto; margin-right: 19px; color: #555; }
.bc-rule { width: 272px; height: 2px; margin-top: 47px; background: #c8c8c8; }
.bc-require { display: flex; align-items: center; gap: 13px; height: 24px; margin-top: 15px; font-size: 18px; color: #555; }
.bc-rbox { width: 18px; height: 18px; border: 2px solid #444; }

/* horizontal slicer */
.hslicer { left: 1252px; top: 645px; width: 413px; }
.hs-head { display: flex; align-items: center; justify-content: space-between; height: 24px; font: 17.900px/24px Roboto, sans-serif; color: #333; }
.hs-chev { width: 15px; height: 10px; color: #555; }
.hs-grid { display: grid; grid-template-columns: 190px 189px; grid-auto-rows: 71.500px; column-gap: 2.500px; row-gap: 4.500px; margin: 4px 0 0 17px; }
.tile { display: flex; align-items: center; justify-content: center; padding-top: 2px; background: #eaeaea; font: 15.500px/20px Roboto, sans-serif; color: #777; }

/* annotations */
.tab-frame { position: absolute; left: 998px; top: 2px; width: 22px; height: 116px; border: 3px solid #10a88a; box-shadow: 1px 1px 3px rgba(0,0,0,.3); }
.red-frame { position: absolute; border: 2px solid #f04040; }
.viz-frame { left: 1029px; top: 90px; width: 31px; height: 23px; border-width: 3px; }
.bar-frame { left: 899px; top: 153px; width: 57px; height: 21px; }
.tab-label { position: absolute; left: 844px; top: 16px; font: 32px/42px "Liberation Sans", sans-serif; color: #14ae8f; text-shadow: 2px 0 0 #fff, -2px 0 0 #fff, 0 2px 0 #fff, 0 -2px 0 #fff, 2px 2px 0 #fff, -2px 2px 0 #fff, 2px -2px 0 #fff, -2px -2px 0 #fff; filter: drop-shadow(2px 2px 2px rgba(0,0,0,.45)); white-space: nowrap; }

.arrows { position: absolute; left: 0; top: 0; width: 1665px; height: 1030px; pointer-events: none; filter: drop-shadow(1px 2px 1.500px rgba(0,0,0,.3)); }
.arrow-lines path { fill: none; stroke: #f04545; stroke-width: 1.800; }

.badge { position: absolute; display: flex; align-items: center; justify-content: center; border-radius: 50%; background: radial-gradient(circle at 45% 40%, #ff4a4a, #ee3a3e); color: #fff; font-family: "Liberation Sans", sans-serif; box-shadow: 2px 3px 5px rgba(0,0,0,.4); }
.b1 { left: 180px; top: 162px; width: 41px; height: 41px; font-size: 30px; }
.b2 { left: 1021px; top: 52px; width: 32px; height: 32px; font-size: 24px; }
.b3 { left: 909px; top: 113px; width: 32px; height: 32px; font-size: 24px; }
.b4 { left: 1071px; top: 188px; width: 30px; height: 31px; font-size: 24px; }
.b5 { left: 1077px; top: 304px; width: 31px; height: 31px; font-size: 24px; }
.b6 { left: 673px; top: 575px; width: 41px; height: 41px; font-size: 30px; }
.b7 { left: 1012px; top: 743px; width: 41px; height: 41px; font-size: 30px; }
.b8 { left: 1551px; top: 826px; width: 41px; height: 41px; font-size: 30px; }
```
